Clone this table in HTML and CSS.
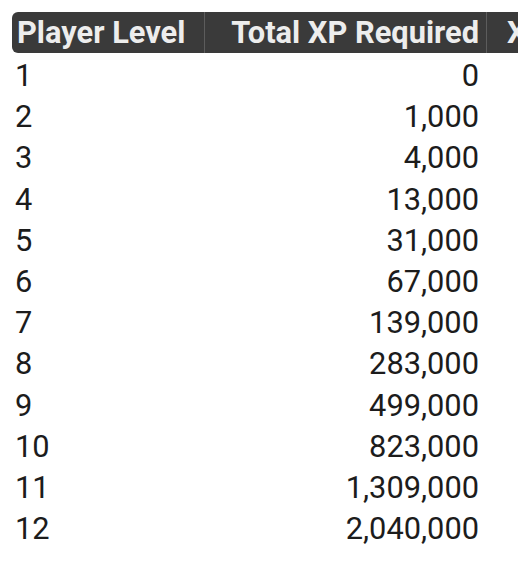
FILE: index.html
```html
<!DOCTYPE html>
<html lang="en">
<head>
<meta charset="utf-8">
<title>Player Levels</title>
<link rel="stylesheet" href="styles.css">
</head>
<body>
<div class="frame">
<table class="xp-table">
  <colgroup>
    <col class="c-level">
    <col class="c-total">
    <col class="c-next">
  </colgroup>
  <thead>
    <tr>
      <th class="h-level">Player Level</th>
      <th class="h-total">Total XP Required</th>
      <th class="h-next">X</th>
    </tr>
  </thead>
  <tbody>
    <tr><td>1</td><td class="num">0</td><td></td></tr>
    <tr><td>2</td><td class="num">1,000</td><td></td></tr>
    <tr><td>3</td><td class="num">4,000</td><td></td></tr>
    <tr><td>4</td><td class="num">13,000</td><td></td></tr>
    <tr><td>5</td><td class="num">31,000</td><td></td></tr>
    <tr><td>6</td><td class="num">67,000</td><td></td></tr>
    <tr><td>7</td><td class="num">139,000</td><td></td></tr>
    <tr><td>8</td><td class="num">283,000</td><td></td></tr>
    <tr><td>9</td><td class="num">499,000</td><td></td></tr>
    <tr><td>10</td><td class="num">823,000</td><td></td></tr>
    <tr><td>11</td><td class="num">1,309,000</td><td></td></tr>
    <tr><td>12</td><td class="num">2,040,000</td><td></td></tr>
  </tbody>
</table>
</div>
</body>
</html>
```

FILE: styles.css
```css
html, body {
  margin: 0;
  padding: 0;
  background: #ffffff;
}
body {
  overflow: hidden;
  font-family: Roboto, "Noto Sans", Arial, sans-serif;
  color: #1c1c1c;
}
.frame {
  padding: 12px 0 0 12px;
  width: 540px;
  overflow: hidden;
}
.xp-table {
  border-collapse: separate;
  border-spacing: 0;
  table-layout: fixed;
  width: 540px;
  font-size: 30.8px;
}
.c-level { width: 193px; }
.c-total { width: 282px; }
.c-next { width: 65px; }

.xp-table th {
  background: #3a3a3a;
  color: #ededed;
  font-weight: 700;
  height: 41px;
  line-height: 41px;
  padding: 0;
  white-space: nowrap;
  overflow: hidden;
}
.h-level {
  text-align: left;
  padding-left: 5px !important;
  border-radius: 6px 0 0 6px;
  border-right: 1.5px solid #5c5c5c;
}
.h-total {
  text-align: right;
  padding-right: 7px !important;
  border-right: 1.5px solid #5c5c5c;
}
.h-next {
  text-align: left;
  padding-left: 20px !important;
}
.xp-table td {
  padding: 5px 0 0 0;
  line-height: 36.2px;
  white-space: nowrap;
}
.xp-table td:first-child {
  padding-left: 3px;
}
.xp-table td.num {
  text-align: right;
  padding-right: 8px;
}
```
